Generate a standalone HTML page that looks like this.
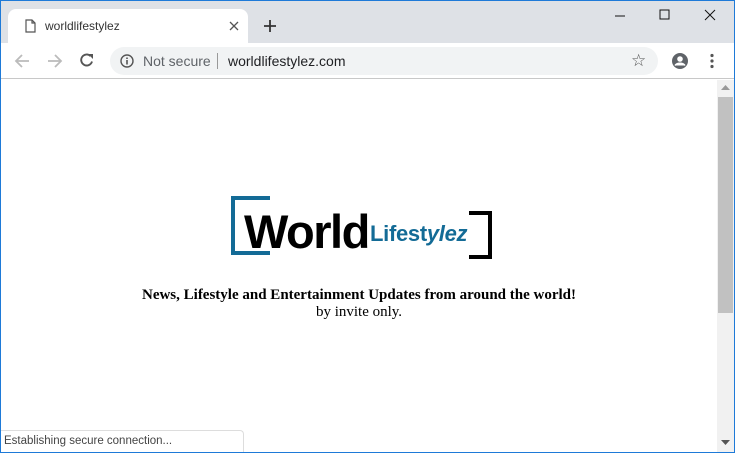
<!DOCTYPE html>
<html><head><meta charset="utf-8"><style>
*{margin:0;padding:0;box-sizing:border-box}
body{width:735px;height:453px;overflow:hidden;background:#fff;font-family:"Liberation Sans",sans-serif;position:relative}
.frame{position:absolute;inset:0;border:1px solid #1e7ad8;pointer-events:none;z-index:10}
.top{position:absolute;left:0;top:0;width:735px;height:43px;background:#dee1e6}
.tab{position:absolute;left:8px;top:9px;width:240px;height:34px;background:#fff;border-radius:8px 8px 0 0}
.tab .t{position:absolute;left:37px;top:10px;font-size:12px;color:#333}
.bar{position:absolute;left:0;top:43px;width:735px;height:36px;background:#fff;border-bottom:1px solid #c8c8c8}
.omni{position:absolute;left:110px;top:4px;width:548px;height:28px;background:#f1f3f4;border-radius:14px}
.page{position:absolute;left:1px;top:80px;width:716px;height:372px}
.sb{position:absolute;left:717px;top:80px;width:17px;height:372px;background:#f1f1f1}
.thumb{position:absolute;left:1px;top:17px;width:15px;height:216px;background:#c1c1c1}
.status{position:absolute;left:1px;top:430px;width:243px;height:22px;background:#fff;border:1px solid #ddd;border-left:none;border-bottom:none;border-radius:0 4px 0 0;font-size:11.5px;color:#444;padding:4px 3px}
.msg{position:absolute;left:0;width:716px;text-align:center;font-family:"Liberation Serif",serif;font-size:15px;color:#000}
</style></head><body>
<div class="top">
<div class="tab">
<svg style="position:absolute;left:17px;top:10px" width="11" height="14" viewBox="0 0 11 14"><path d="M1 1h6l3 3v9H1z M7 1v3h3" fill="none" stroke="#555" stroke-width="1.2"/></svg>
<span class="t">worldlifestylez</span>
<svg style="position:absolute;left:221px;top:12px" width="10" height="10"><path d="M1 1L9 9M9 1L1 9" stroke="#555" stroke-width="1.3"/></svg>
</div>
<svg style="position:absolute;left:263px;top:19px" width="14" height="14"><path d="M7 1v12M1 7h12" stroke="#333" stroke-width="1.8"/></svg>
<svg style="position:absolute;left:614px;top:10px" width="12" height="12"><path d="M1 6h10" stroke="#111" stroke-width="1"/></svg>
<svg style="position:absolute;left:659px;top:9px" width="12" height="12"><rect x="1" y="1" width="9" height="9" fill="none" stroke="#111"/></svg>
<svg style="position:absolute;left:704px;top:9px" width="12" height="12"><path d="M1 1L11 11M11 1L1 11" stroke="#111"/></svg>
</div>
<div class="bar">
<svg style="position:absolute;left:14px;top:10px" width="16" height="16"><path d="M15 8H2M8 2L2 8l6 6" fill="none" stroke="#bbb" stroke-width="1.8"/></svg>
<svg style="position:absolute;left:47px;top:10px" width="16" height="16"><path d="M1 8h13M8 2l6 6-6 6" fill="none" stroke="#bbb" stroke-width="1.8"/></svg>
<svg style="position:absolute;left:79px;top:9px" width="16" height="16"><path d="M13 9.5A5.5 5.5 0 1 1 11.5 4" fill="none" stroke="#555" stroke-width="1.9"/><path d="M9 2h5v5z" fill="#555"/></svg>
<div class="omni">
<svg style="position:absolute;left:10px;top:7px" width="14" height="14"><circle cx="7" cy="7" r="6" fill="none" stroke="#555" stroke-width="1.4"/><path d="M7 6v4.5M7 3.5v1.5" stroke="#555" stroke-width="1.6"/></svg>
<span style="position:absolute;left:33px;top:6px;font-size:14px;color:#5f6368">Not secure</span>
<span style="position:absolute;left:107px;top:6px;width:1px;height:16px;background:#999"></span>
<span style="position:absolute;left:118px;top:6px;font-size:14px;color:#202124">worldlifestylez.com</span>
<span style="position:absolute;left:521px;top:4px;font-size:17px;color:#555">☆</span>
</div>
<svg style="position:absolute;left:671px;top:9px" width="18" height="18"><circle cx="9" cy="9" r="8" fill="#5f6368"/><circle cx="9" cy="7" r="2.8" fill="#fff"/><path d="M4 13.5c2-3 8-3 10 0" fill="#fff" stroke="#fff" stroke-width="1.5"/></svg>
<svg style="position:absolute;left:709px;top:10px" width="6" height="16"><circle cx="3" cy="2.5" r="1.6" fill="#555"/><circle cx="3" cy="8" r="1.6" fill="#555"/><circle cx="3" cy="13.5" r="1.6" fill="#555"/></svg>
</div>
<div class="page">
<svg style="position:absolute;left:227px;top:115px" width="270" height="70">
<path d="M42 3H5v55h37" fill="none" stroke="#136b96" stroke-width="4"/>
<path d="M241 18h21v44h-21" fill="none" stroke="#000" stroke-width="4"/>
</svg>
<div style="position:absolute;left:243px;top:122px;font-size:47px;font-weight:bold;color:#000;letter-spacing:-1.5px;line-height:60px">World</div>
<div style="position:absolute;left:369px;top:139px;font-size:22px;font-weight:bold;color:#136b96;line-height:30px;letter-spacing:-0.3px">Lifest<i>ylez</i></div>
<div class="msg" style="top:207px;font-weight:bold">News, Lifestyle and Entertainment Updates from around the world!</div>
<div class="msg" style="top:224px">by invite only.</div>
</div>
<div class="sb"><div class="thumb"></div>
<svg style="position:absolute;left:4px;top:4px" width="9" height="6"><path d="M0 6L4.5 1 9 6z" fill="#999"/></svg>
<svg style="position:absolute;left:4px;top:360px" width="9" height="6"><path d="M0 0L4.5 5 9 0z" fill="#555"/></svg>
</div>
<div class="status">Establishing secure connection...</div>
<div class="frame"></div>
</body></html>
